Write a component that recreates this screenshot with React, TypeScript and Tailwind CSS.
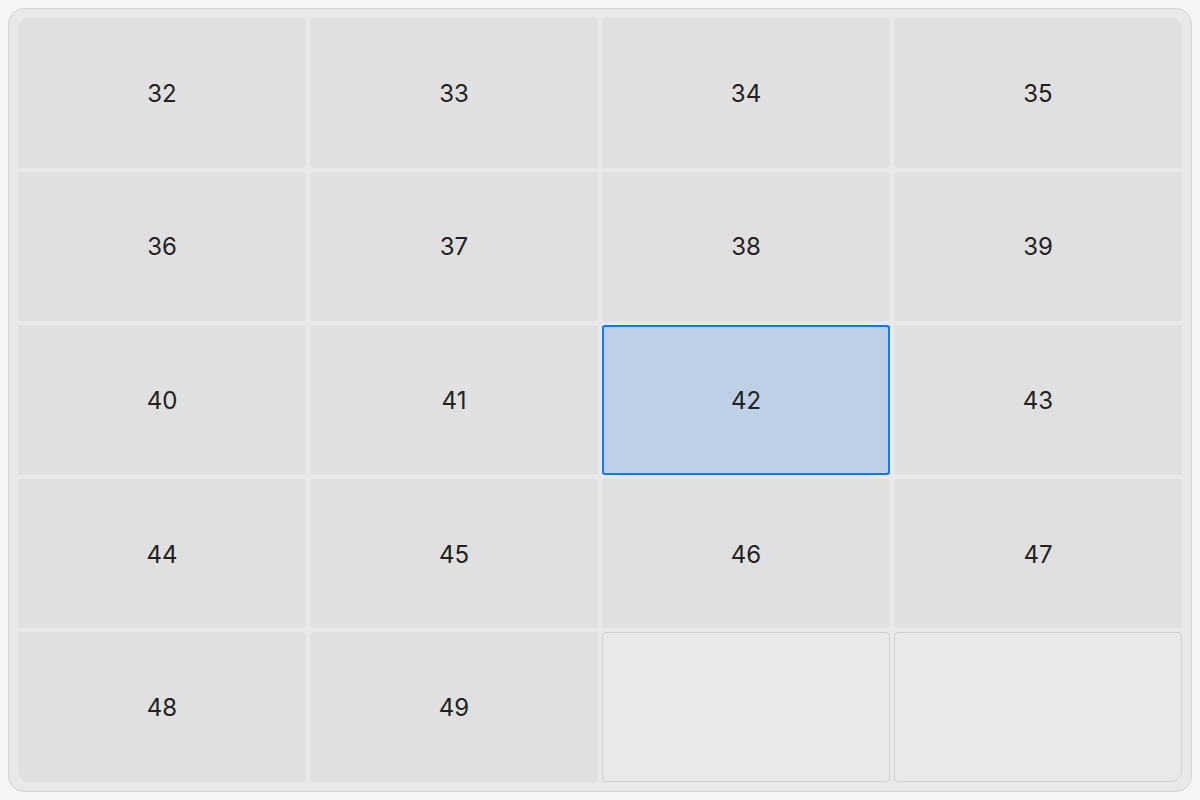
import React from "react";

const nums = Array.from({ length: 18 }, (_, i) => 32 + i);

function corner(n: number) {
    if (n === 32) return "rounded-tl-[11px]";
    if (n === 35) return "rounded-tr-[11px]";
    if (n === 48) return "rounded-bl-[11px]";
    return "";
}

export default function App() {
    return (
        <div className="w-[1200px] h-[800px] bg-[#f6f6f6] p-2" style={{ fontFamily: "Inter, 'Noto Sans', sans-serif" }}>
            <div className="w-full h-full rounded-[16px] border border-[#d3d3d3] bg-[#e9e9e9] p-[9px]">
                <div className="grid grid-cols-4 grid-rows-5 gap-1 w-full h-full">
                    {nums.map((n) =>
                        n === 42 ? (
                            <div
                                key={n}
                                className="flex items-center justify-center pt-[2px] rounded-[3px] border-2 border-[#0a7aff] bg-[#bed0e5] text-[24px] text-[#222]"
                            >
                                {n}
                            </div>
                        ) : (
                            <div
                                key={n}
                                className={`flex items-center justify-center pt-[2px] rounded-[3px] ${corner(n)} bg-[#e0e0e0] text-[24px] text-[#222]`}
                            >
                                {n}
                            </div>
                        )
                    )}
                    <div className="rounded-[4px] border border-[#cfcfcf] bg-[#e9e9e9]" />
                    <div className="rounded-[4px] rounded-br-[11px] border border-[#cfcfcf] bg-[#e9e9e9]" />
                </div>
            </div>
        </div>
    );
}
